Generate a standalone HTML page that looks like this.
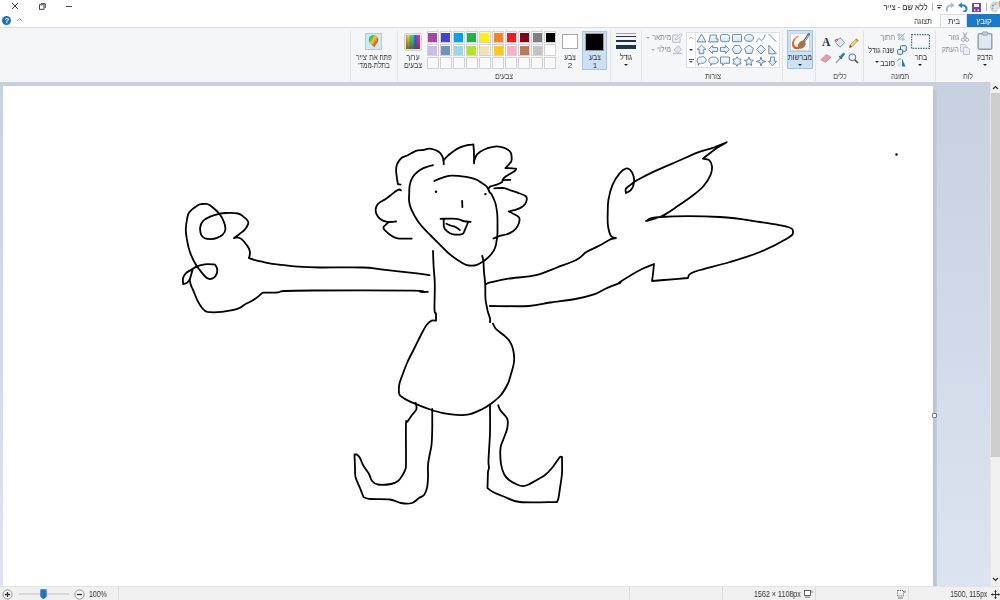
<!DOCTYPE html>
<html><head><meta charset="utf-8">
<style>
*{margin:0;padding:0;box-sizing:border-box}
html,body{width:1000px;height:600px;overflow:hidden;background:#fff;font-family:"Liberation Sans",sans-serif;color:#222}
.a{position:absolute}
#ribbon{left:0;top:27px;width:1000px;height:55px;background:#f5f6f7;border-top:1px solid #dadbdc}
#ws{left:0;top:82px;width:990px;height:504px;background:linear-gradient(#c6d0df,#dce4f1)}
#canvas{left:3px;top:86px;width:930px;height:500px;background:#fff}
#shadow{left:933px;top:90px;width:4px;height:496px;background:linear-gradient(90deg,#b6c1d3,#c3cddd)}
#sb{left:990px;top:82px;width:10px;height:504px;background:#f0f0f0;border-left:1px solid #e6e6e6}
#thumb{left:991px;top:93px;width:9px;height:364px;background:#cdcdcd}
#status{left:0;top:586px;width:1000px;height:14px;background:#f0f0f0;border-top:1px solid #e3e3e3}
.t{position:absolute;white-space:nowrap;font-size:8px;line-height:8px;direction:rtl;color:#333;will-change:transform}
.c{transform:translateX(-50%) scaleX(var(--s,.86));text-align:center}
.r{transform:scaleX(var(--s,.86));transform-origin:right}
.g{color:#8a8a8a}
.sep{position:absolute;top:31px;width:1px;height:50px;background:#e2e3e4}
.arr{position:absolute;width:0;height:0;border-left:2.5px solid transparent;border-right:2.5px solid transparent;border-top:2.5px solid #222}
.cell{position:absolute;width:12px;height:12px;border:1px solid #d2d2d2;background:#fff;padding:0.5px}
.cell i{display:block;width:100%;height:100%}
</style></head><body>

<div class="a" style="left:0;top:0;width:1000px;height:27px;background:#fff"></div>
<!-- title bar -->
<div class="t" style="right:72px;top:3px;font-size:9px;line-height:9px;color:#1a1a1a;transform:scaleX(.84);transform-origin:right">ללא שם - צייר</div>
<div class="a" style="left:931.5px;top:3px;width:1px;height:8px;background:#b5b5b5"></div>
<div class="a" style="left:937px;top:5px;width:5px;height:0.8px;background:#555"></div>
<div class="arr" style="left:937px;top:7px;border-left-width:2.5px;border-right-width:2.5px;border-top-width:2.5px"></div>
<svg class="a" style="left:945px;top:2px" width="10" height="10" viewBox="0 0 10 10"><path d="M2 9.5C1.3 6 2.5 3.3 6 3.2" fill="none" stroke="#a9bcd2" stroke-width="2.1"/><path d="M5.8 0.3L9.8 3.2L5.8 6.2Z" fill="#a9bcd2"/></svg>
<svg class="a" style="left:958px;top:2px" width="10" height="10" viewBox="0 0 10 10"><path d="M3.5 3.2C7 3 8.8 5 8.5 7.2C8.2 9 6.8 9.8 5.2 9.5" fill="none" stroke="#2c80d3" stroke-width="2.1"/><path d="M4 0.3L0.2 3.2L4 6.2Z" fill="#2c80d3"/></svg>
<svg class="a" style="left:972px;top:3px" width="9" height="9" viewBox="0 0 9 9"><rect x="0" y="0" width="9" height="9" fill="#7448a0"/><rect x="2" y="1" width="5" height="3" fill="#f3eef8"/><rect x="2" y="6.5" width="1.5" height="1.5" fill="#e8dff2"/><rect x="5.5" y="6.5" width="1.5" height="1.5" fill="#e8dff2"/></svg>
<div class="a" style="left:986px;top:3px;width:1px;height:8px;background:#b5b5b5"></div>
<svg class="a" style="left:990px;top:1px" width="10" height="12" viewBox="0 0 10 12"><path d="M5 1C8.5 1 10 3 10 5.5C10 7 9 7.5 8 7.3C7 7.2 6.6 8 7 9C7.4 10.3 6.5 11 5 11C2 11 0.5 8.5 0.5 6C0.5 3 2.5 1 5 1Z" fill="#dfe6ec" stroke="#9fb0bf" stroke-width="0.6"/><circle cx="3" cy="4.5" r="1.1" fill="#4aa0e0"/><circle cx="5.5" cy="3.2" r="1" fill="#7bc47a"/><circle cx="2.8" cy="7.5" r="1" fill="#e0a040"/><path d="M8.5 0L10 0V6L8.8 5Z" fill="#f0a040"/></svg>
<!-- window buttons -->
<svg class="a" style="left:11px;top:2px" width="8" height="8" viewBox="0 0 8 8"><path d="M1 1L7 7M7 1L1 7" stroke="#222" stroke-width="0.9"/></svg>
<svg class="a" style="left:39px;top:3px" width="7" height="7" viewBox="0 0 7 7"><rect x="0.5" y="1.8" width="4.5" height="4.5" fill="none" stroke="#333" stroke-width="0.9"/><path d="M1.8 0.6H6.3V5" fill="none" stroke="#333" stroke-width="0.9"/></svg>
<div class="a" style="left:66px;top:6px;width:6px;height:1px;background:#444"></div>
<!-- tabs -->
<div class="a" style="left:967px;top:14px;width:33px;height:13px;background:#1979ca"></div>
<div class="t c" style="left:983.5px;top:18px;color:#fff;font-size:8px;--s:1">קובץ</div>
<div class="a" style="left:940px;top:14px;width:27px;height:14px;background:#f8f9fa;border:1px solid #dadbdc;border-bottom:none"></div>
<div class="t c" style="left:954px;top:18px;font-size:8px;--s:.95">בית</div>
<div class="t c" style="left:923px;top:18px;font-size:8px">תצוגה</div>
<!-- help -->
<div class="a" style="left:2px;top:16px;width:9px;height:9px;border-radius:50%;background:#1a6fc4"></div>
<div class="t c" style="left:6.5px;top:17px;color:#fff;font-size:8px;font-weight:bold;direction:ltr;--s:1">?</div>
<svg class="a" style="left:16px;top:17px" width="7" height="5" viewBox="0 0 7 5"><path d="M1 4L3.5 1.5L6 4" fill="none" stroke="#999" stroke-width="1"/></svg>

<div id="ribbon" class="a"></div>
<div class="sep" style="left:935px"></div>
<div class="sep" style="left:863px"></div>
<div class="sep" style="left:815px"></div>
<div class="sep" style="left:782px"></div>
<div class="sep" style="left:641px"></div>
<div class="sep" style="left:610px"></div>
<div class="sep" style="left:397px"></div>
<div class="sep" style="left:350px"></div>
<!-- group labels -->
<div class="t c" style="left:968px;top:73px;color:#444">לוח</div>
<div class="t c" style="left:899.5px;top:73px;color:#444">תמונה</div>
<div class="t c" style="left:840px;top:73px;color:#444">כלים</div>
<div class="t c" style="left:712.5px;top:73px;color:#444">צורות</div>
<div class="t c" style="left:503.5px;top:73px;color:#444">צבעים</div>

<!-- clipboard -->
<svg class="a" style="left:977px;top:31px" width="16" height="20" viewBox="0 0 16 20"><rect x="1.2" y="2.6" width="13.6" height="15.6" rx="1.2" fill="#dfe8f2" stroke="#8e9db0" stroke-width="1.4"/><rect x="5.2" y="1" width="5.6" height="3" rx="0.8" fill="#c9d3de" stroke="#8e9db0" stroke-width="1"/></svg>
<div class="t c" style="left:985px;top:54px">הדבק</div>
<div class="arr" style="left:982.5px;top:64px"></div>
<svg class="a" style="left:961px;top:32px" width="8" height="10" viewBox="0 0 8 10"><path d="M2 0.5L5.5 6M6 0.5L2.5 6" stroke="#9aaabb" stroke-width="1.1" fill="none"/><circle cx="2" cy="7.8" r="1.6" fill="none" stroke="#9aaabb" stroke-width="1"/><circle cx="6" cy="7.8" r="1.6" fill="none" stroke="#9aaabb" stroke-width="1"/></svg>
<div class="t r g" style="right:41px;top:34px">גזור</div>
<svg class="a" style="left:960px;top:44px" width="10" height="11" viewBox="0 0 10 11"><path d="M0.5 0.5H5L6 1.5V7.5H0.5Z" fill="#e9eef4" stroke="#b5c1cf" stroke-width="0.9"/><path d="M3.5 3.5H8L9.5 5V10.5H3.5Z" fill="#e9eef4" stroke="#b5c1cf" stroke-width="0.9"/></svg>
<div class="t r g" style="right:41px;top:46px">העתק</div>
<!-- image -->
<svg class="a" style="left:911px;top:34px" width="19" height="15" viewBox="0 0 19 15"><rect x="0.6" y="0.6" width="17.8" height="13.8" fill="none" stroke="#4a6d96" stroke-width="1.2" stroke-dasharray="1.6 1"/></svg>
<div class="t c" style="left:920.5px;top:54px">בחר</div>
<div class="arr" style="left:918px;top:64px"></div>
<svg class="a" style="left:897px;top:33px" width="9" height="8" viewBox="0 0 9 8"><path d="M2 0V6H8M0 2H6V8M1 7L8 0" fill="none" stroke="#9fb4c8" stroke-width="1"/></svg>
<div class="t r g" style="right:105px;top:34px">חתוך</div>
<svg class="a" style="left:897px;top:45px" width="10" height="10" viewBox="0 0 10 10"><rect x="3.5" y="0.7" width="5.8" height="5.5" rx="0.8" fill="#eaf2fa" stroke="#2f6fa8" stroke-width="1"/><rect x="0.7" y="4.5" width="4.8" height="4.8" rx="0.8" fill="#eaf2fa" stroke="#2f6fa8" stroke-width="1"/></svg>
<div class="t r" style="right:106px;top:47px">שנה גודל</div>
<svg class="a" style="left:896px;top:58px" width="10" height="9" viewBox="0 0 10 9"><path d="M6 0.5L9.5 8.5H6Z" fill="#2e78b8"/><path d="M4.5 2.5L1 8.5H4.5Z" fill="#d7dde4"/><path d="M1.5 3C2.5 1 4 0.8 5 1" fill="none" stroke="#2e78b8" stroke-width="0.9"/></svg>
<div class="t r" style="right:105px;top:60px">סובב</div>
<div class="arr" style="left:874.5px;top:61px"></div>
<!-- tools -->
<svg class="a" style="left:847.5px;top:37.5px" width="11" height="11" viewBox="0 0 11 11"><path d="M1.5 9.5L2.2 7L8.5 0.8L10.2 2.5L4 8.8Z" fill="#f0d77a" stroke="#b58a3a" stroke-width="0.8"/><path d="M1.5 9.5L2.2 7L4 8.8Z" fill="#6b4a2a"/><path d="M8.5 0.8L10.2 2.5L9.2 3.5L7.5 1.8Z" fill="#e07a5a"/></svg>
<svg class="a" style="left:834px;top:36.5px" width="12" height="11" viewBox="0 0 12 11"><path d="M6 0.8L10.8 5.5L6 10.2L1.5 5.5Z" fill="#dceaf7" stroke="#6b90b5" stroke-width="0.9"/><path d="M1 4.5C1.5 2.5 3 2 4 2.3" fill="none" stroke="#e0603a" stroke-width="1.4"/></svg>
<div class="a" style="left:822px;top:36px;font-family:'Liberation Serif',serif;font-weight:bold;font-size:11.5px;line-height:12px;color:#1d2f4f">A</div>
<svg class="a" style="left:820px;top:53px" width="12" height="10" viewBox="0 0 12 10"><path d="M0.8 7L6.5 1.2L11 4.2L5.5 9.2Z" fill="#f29aa6" stroke="#d77a88" stroke-width="0.7"/></svg>
<svg class="a" style="left:835px;top:52px" width="11" height="12" viewBox="0 0 11 12"><path d="M1 11L6 5" stroke="#8ea3b8" stroke-width="1.3"/><path d="M5 4L8 1C9 0.3 10.5 1.5 9.8 2.6L7 6Z" fill="#2e7ac0"/><path d="M4.3 4.3L6.8 6.8" stroke="#1d5a94" stroke-width="1.4"/></svg>
<svg class="a" style="left:848px;top:53px" width="11" height="11" viewBox="0 0 11 11"><circle cx="4.3" cy="4.3" r="3.3" fill="#eef4fa" stroke="#6c829a" stroke-width="1.1"/><path d="M6.8 6.8L10 10" stroke="#6a5238" stroke-width="1.7"/></svg>
<!-- brushes -->
<div class="a" style="left:787px;top:30px;width:26px;height:38.5px;background:#cde1f5;border:1px solid #9dc3e8"></div>
<div class="a" style="left:788px;top:51px;width:24px;height:1px;background:#a9cbec"></div>
<div class="a" style="left:790px;top:32.5px;width:20px;height:18.5px;background:#fafafa;border:1px solid #c9d6e3"></div>
<svg class="a" style="left:790px;top:32px" width="20" height="19" viewBox="0 0 20 19"><defs><linearGradient id="bo" x1="0" y1="0" x2="0" y2="1"><stop offset="0" stop-color="#f08a4a"/><stop offset="1" stop-color="#d8501c"/></linearGradient></defs><path d="M8.5 3.5C3.5 5.2 0.6 10.5 2.6 14.8C4.5 18.3 9.8 18 12.3 14.6L10.4 13.2C8.5 15.6 5.6 15.6 4.6 13.6C3.2 10.8 5 6.6 8.8 4.6Z" fill="url(#bo)"/><path d="M13.6 10.2L18.8 2.2" stroke="#56667c" stroke-width="2.4" stroke-linecap="round"/><path d="M14.6 9.2L18.6 2.8" stroke="#d8e0ea" stroke-width="0.7"/><ellipse cx="11.8" cy="12.6" rx="3.3" ry="4.3" transform="rotate(42 11.8 12.6)" fill="#a47646"/></svg>
<div class="t c" style="left:800px;top:54px">מברשות</div>
<div class="arr" style="left:797.5px;top:64px"></div>
<!-- shapes gallery -->
<div class="a" style="left:686px;top:32px;width:94px;height:36px;background:#fff;border:1px solid #dcdfe3"></div>
<div class="a" style="left:694.5px;top:33px;width:1px;height:34px;background:#e2e4e7"></div>
<svg class="a" style="left:688px;top:36px" width="6" height="4" viewBox="0 0 6 4"><path d="M1 3L3 1L5 3" fill="none" stroke="#b8b8b8" stroke-width="0.9"/></svg>
<div class="arr" style="left:688.5px;top:49px;border-top-color:#333"></div>
<div class="a" style="left:688.5px;top:59px;width:5px;height:1px;background:#555"></div>
<div class="arr" style="left:688.5px;top:61px;border-top-color:#555"></div>
<svg class="a" style="left:695px;top:32px" width="85" height="36" viewBox="0 0 85 36"><defs><linearGradient id="sg" x1="0" y1="0" x2="0" y2="1"><stop offset="0" stop-color="#fbfdff"/><stop offset="1" stop-color="#cfe4f5"/></linearGradient></defs><g fill="url(#sg)" stroke="#52789b" stroke-width="0.85" stroke-linejoin="round"><path d="M6.5 2L11 10H2Z"/><path d="M13.8 10L15.3 3H21.5L21 6.8H23V10Z"/><rect x="25.5" y="2.5" width="9" height="7.2" rx="2"/><rect x="37.5" y="2.5" width="9" height="7.2" rx="0.6"/><ellipse cx="54" cy="6" rx="4.4" ry="3.4"/><path d="M61.5 10C63 6.5 64.3 5.8 65.3 7.6C66.3 9.4 68 8.5 70.3 2.5" fill="none"/><path d="M73.5 2L81.5 10" fill="none"/><path d="M6.5 13.2L10.8 17.3H8.8V21.8H4.2V17.3H2.2Z"/><path d="M13.5 17.5L17.6 13.4V15.6H22.6V19.4H17.6V21.6Z"/><path d="M34.5 17.5L30.4 13.4V15.6H25.4V19.4H30.4V21.6Z"/><path d="M39.6 13.5H44.4L46.8 17.5L44.4 21.5H39.6L37.2 17.5Z"/><path d="M54 13.2L58.4 16.3L56.7 21.5H51.3L49.6 16.3Z"/><path d="M66 13L70.5 17.5L66 22L61.5 17.5Z"/><path d="M73.8 13.2L81.5 21.8H73.8Z"/><path d="M3.5 31.2C1.8 30.5 1.5 28 2.6 27C2.5 25.2 4.5 24.5 5.8 25.2C7 24.3 9 24.5 9.8 25.8C11.4 26.2 11.6 28.8 10.4 29.6C10 31.2 7.8 31.8 6.5 31.2C5.8 31.8 4.8 32 4.2 31.6L3.2 33.5Z"/><path d="M16.2 31.7C14.5 31.2 13.7 30 13.7 28.5C13.7 26.4 15.8 25 18.5 25C21.2 25 23.3 26.4 23.3 28.5C23.3 30.6 21.2 32 18.5 32C17.9 32 17.4 31.9 16.9 31.8L15.5 33.8Z"/><path d="M25.5 25H34.5V31.3H29.3L27.6 33.6V31.3H25.5Z"/><path d="M42.00 24.70L43.45 26.99L46.16 27.10L44.90 29.50L46.16 31.90L43.45 32.01L42.00 34.30L40.55 32.01L37.84 31.90L39.10 29.50L37.84 27.10L40.55 26.99Z"/><path d="M54.00 24.90L55.23 28.00L58.57 28.22L56.00 30.35L56.82 33.58L54.00 31.80L51.18 33.58L52.00 30.35L49.43 28.22L52.77 28.00Z"/><path d="M66.00 24.90L67.06 28.44L70.60 29.50L67.06 30.56L66.00 34.10L64.94 30.56L61.40 29.50L64.94 28.44Z"/><path d="M75.6 25H79.4V29.3H81.6L77.5 33.8L73.4 29.3H75.6Z"/></g></svg>
<!-- outline/fill -->
<svg class="a" style="left:672px;top:33px" width="11" height="10" viewBox="0 0 11 10"><path d="M0.7 9.3V2H6M0.7 9.3H8V5" fill="none" stroke="#a9b6c4" stroke-width="0.9"/><path d="M3 7L3.5 5L8.8 0.7L10.3 2.2L5 6.5Z" fill="#eef2f6" stroke="#a9b6c4" stroke-width="0.8"/></svg>
<div class="t r g" style="right:329px;top:34px">מיתאר</div>
<div class="arr" style="left:646px;top:36.5px;border-top-color:#aaa"></div>
<svg class="a" style="left:672px;top:44px" width="11" height="11" viewBox="0 0 11 11"><path d="M1 9.5H10" stroke="#b6c2cf" stroke-width="1.4"/><path d="M2 6L6 1.5L9.5 5.5L5.5 9Z" fill="#dde6ef" stroke="#a9b6c4" stroke-width="0.8"/></svg>
<div class="t r g" style="right:329px;top:46px">מילוי</div>
<div class="arr" style="left:651px;top:48.5px;border-top-color:#aaa"></div>
<!-- size -->
<div class="a" style="left:616px;top:32.5px;width:20px;height:1.5px;background:#9aa3ad"></div>
<div class="a" style="left:616px;top:35.5px;width:20px;height:1.6px;background:#1d3353"></div>
<div class="a" style="left:616px;top:39.5px;width:20px;height:2.4px;background:#1d3353"></div>
<div class="a" style="left:616px;top:44.5px;width:20px;height:4px;background:#1d3353"></div>
<div class="t c" style="left:626px;top:54px">גודל</div>
<div class="arr" style="left:623.5px;top:64px"></div>
<!-- color1/2 -->
<div class="a" style="left:582px;top:30.5px;width:25px;height:39px;background:#cce0f5;border:1px solid #a3c7ea"></div>
<div class="a" style="left:585px;top:32.5px;width:19px;height:18px;background:#000;border:1px solid #9a9a9a;box-shadow:inset 0 0 0 1px #fff"></div>
<div class="a" style="left:586px;top:33.5px;width:17px;height:16px;background:#000"></div>
<div class="t c" style="left:594.5px;top:54px">צבע</div>
<div class="t c" style="left:594.5px;top:62px;direction:ltr;--s:1">1</div>
<div class="a" style="left:562px;top:34px;width:15.5px;height:15px;background:#fff;border:1px solid #a9a9a9"></div>
<div class="t c" style="left:569.5px;top:54px">צבע</div>
<div class="t c" style="left:569.5px;top:62px;direction:ltr;--s:1">2</div>
<div class="cell" style="left:426.5px;top:31.2px"><i style="background:#a349a4"></i></div>
<div class="cell" style="left:439.6px;top:31.2px"><i style="background:#3f48cc"></i></div>
<div class="cell" style="left:452.7px;top:31.2px"><i style="background:#00a2e8"></i></div>
<div class="cell" style="left:465.8px;top:31.2px"><i style="background:#22b14c"></i></div>
<div class="cell" style="left:478.9px;top:31.2px"><i style="background:#fff200"></i></div>
<div class="cell" style="left:492.0px;top:31.2px"><i style="background:#ff7f27"></i></div>
<div class="cell" style="left:505.1px;top:31.2px"><i style="background:#ed1c24"></i></div>
<div class="cell" style="left:518.2px;top:31.2px"><i style="background:#880015"></i></div>
<div class="cell" style="left:531.3px;top:31.2px"><i style="background:#7f7f7f"></i></div>
<div class="cell" style="left:544.4px;top:31.2px"><i style="background:#000000"></i></div>
<div class="cell" style="left:426.5px;top:44.2px"><i style="background:#c8bfe7"></i></div>
<div class="cell" style="left:439.6px;top:44.2px"><i style="background:#7092be"></i></div>
<div class="cell" style="left:452.7px;top:44.2px"><i style="background:#99d9ea"></i></div>
<div class="cell" style="left:465.8px;top:44.2px"><i style="background:#b5e61d"></i></div>
<div class="cell" style="left:478.9px;top:44.2px"><i style="background:#efe4b0"></i></div>
<div class="cell" style="left:492.0px;top:44.2px"><i style="background:#ffc90e"></i></div>
<div class="cell" style="left:505.1px;top:44.2px"><i style="background:#ffaec9"></i></div>
<div class="cell" style="left:518.2px;top:44.2px"><i style="background:#b97a57"></i></div>
<div class="cell" style="left:531.3px;top:44.2px"><i style="background:#c3c3c3"></i></div>
<div class="cell" style="left:544.4px;top:44.2px"><i style="background:#ffffff"></i></div>
<div class="cell" style="left:426.5px;top:57.2px;background:#f9f9f9"></div>
<div class="cell" style="left:439.6px;top:57.2px;background:#f9f9f9"></div>
<div class="cell" style="left:452.7px;top:57.2px;background:#f9f9f9"></div>
<div class="cell" style="left:465.8px;top:57.2px;background:#f9f9f9"></div>
<div class="cell" style="left:478.9px;top:57.2px;background:#f9f9f9"></div>
<div class="cell" style="left:492.0px;top:57.2px;background:#f9f9f9"></div>
<div class="cell" style="left:505.1px;top:57.2px;background:#f9f9f9"></div>
<div class="cell" style="left:518.2px;top:57.2px;background:#f9f9f9"></div>
<div class="cell" style="left:531.3px;top:57.2px;background:#f9f9f9"></div>
<div class="cell" style="left:544.4px;top:57.2px;background:#f9f9f9"></div>

<!-- edit colors -->
<div class="a" style="left:404px;top:32.5px;width:18px;height:18px;border:1px solid #d6d0ca;border-radius:2px;background:#ebe7e3;padding:1px"><div style="width:100%;height:100%;background:linear-gradient(rgba(255,255,255,.1),rgba(90,70,50,.75)),linear-gradient(90deg,#e8901a,#e8e020,#30d030,#20c8e0,#2040e0,#c020d0,#e02090)"></div></div>
<div class="t c" style="left:413px;top:54px">ערוך</div>
<div class="t c" style="left:413px;top:62px">צבעים</div>
<!-- paint3d -->
<div class="a" style="left:364.5px;top:32.5px;width:17px;height:17px;background:#c6eef8;border:1px solid #c0c6cc"></div>
<svg class="a" style="left:367px;top:34px" width="13" height="15" viewBox="0 0 13 15"><defs><linearGradient id="bl" x1="0.1" y1="0.1" x2="0.9" y2="0.8"><stop offset="0" stop-color="#1aa3d9"/><stop offset="0.25" stop-color="#5cc24a"/><stop offset="0.45" stop-color="#f7d117"/><stop offset="0.7" stop-color="#f2711c"/><stop offset="1" stop-color="#d8262f"/></linearGradient></defs><path d="M6.5 1C9.6 1 11.6 3.2 11.3 6C11 8.8 8.6 10.2 7.3 13.6L6.2 11.8C3.5 10 1.6 8.2 1.8 5.4C2 2.8 4 1 6.5 1Z" fill="url(#bl)"/><path d="M4.5 9.5C5.5 10.8 6.5 11.2 7.3 13.6L6.2 11.8C5.2 11 4.8 10.5 4.5 9.5Z" fill="#6b3fa0"/></svg>
<div class="t c" style="left:374px;top:54px;--s:.8">פתח את 'צייר</div>
<div class="t c" style="left:374px;top:62px;--s:.8">בתלת-ממד'</div>

<div id="ws" class="a"></div>
<div id="shadow" class="a"></div>
<div id="canvas" class="a"></div>
<!--DRAW--><svg class="a" style="left:0;top:0" width="1000" height="600" viewBox="0 0 1000 600"><g fill="none" stroke="#000" stroke-width="1.8" stroke-linecap="round" stroke-linejoin="round"><path d="M400.6 184.6L397.9 184.1C397.8 183.2 397.3 181.0 397.0 178.7C396.7 176.5 396.1 173.0 396.1 170.6C396.1 168.2 396.1 166.4 397.0 164.3C397.9 162.2 399.7 159.5 401.5 158.0C403.3 156.5 405.4 156.5 407.8 155.3C410.2 154.1 413.2 151.7 415.9 150.8C418.6 149.9 421.9 150.3 424.0 149.9C426.1 149.5 426.9 148.6 428.5 148.6C430.2 148.5 432.1 148.9 433.9 149.5C435.7 150.1 438.0 151.1 439.3 152.2C440.7 153.2 441.3 154.6 442.0 155.8C442.7 157.0 443.1 157.9 443.4 159.4C443.7 160.8 443.7 163.5 443.8 164.3"/><path d="M443.4 160.3C444.2 159.4 446.4 157.0 448.3 155.3C450.2 153.7 452.5 151.7 454.6 150.4C456.7 149.0 458.6 148.1 460.8 147.2C463.0 146.3 465.9 145.4 468.0 145.0C470.1 144.5 472.5 144.6 473.4 144.5C473.5 145.6 473.7 147.7 473.9 150.8C474.0 154.0 474.1 161.3 474.1 163.4"/><path d="M474.1 161.2C474.6 160.0 475.3 156.4 477.0 154.4C478.7 152.5 481.5 150.7 484.2 149.5C486.9 148.2 490.5 147.2 493.2 146.8C495.9 146.3 498.2 146.4 500.4 146.8C502.7 147.1 505.0 148.0 506.7 149.0C508.4 150.0 509.9 151.1 510.8 152.6C511.6 154.1 511.6 156.5 511.7 158.0C511.7 159.5 511.7 160.5 511.2 161.6C510.7 162.7 509.5 163.7 508.5 164.8C507.5 165.8 505.9 167.5 505.4 168.1C506.6 168.1 511.2 168.2 513.0 168.4C514.8 168.5 515.6 168.7 516.2 168.8C515.9 169.2 516.1 170.1 514.8 171.1C513.5 172.0 510.3 173.5 508.5 174.7C506.7 175.8 505.0 176.9 504.0 177.8C503.0 178.7 503.0 179.3 502.7 180.1C502.3 180.8 502.7 181.6 501.8 182.3C500.8 183.1 498.7 183.9 496.8 184.6C494.9 185.2 491.9 185.7 490.5 186.4C489.2 187.0 489.0 188.2 488.7 188.6"/><path d="M502.7 180.1L510.3 179.9"/><path d="M494.3 188.3C496.0 188.3 501.5 187.8 504.2 188.1C506.9 188.4 508.1 189.5 510.5 190.4C512.9 191.2 516.1 192.1 518.6 193.1C521.2 194.0 524.5 195.1 525.8 196.2C527.2 197.3 526.9 198.5 526.7 199.8C526.6 201.2 526.0 203.0 524.9 204.3C523.9 205.7 522.2 206.9 520.4 207.9C518.6 208.9 516.1 209.6 514.1 210.2C512.2 210.8 509.6 211.3 508.7 211.5C509.5 211.9 511.6 212.9 513.2 213.8C514.9 214.7 517.6 215.8 518.6 216.9C519.7 218.0 519.7 219.0 519.5 220.5C519.4 222.0 518.6 224.3 517.7 225.9C516.8 227.6 515.5 229.2 514.1 230.4C512.8 231.6 511.0 232.4 509.6 233.1C508.3 233.8 507.7 234.0 506.0 234.5C504.4 234.9 501.2 235.4 499.7 235.8C498.2 236.3 498.1 236.7 497.0 237.2C496.0 237.6 494.0 238.3 493.4 238.5"/><path d="M401.0 190.4C400.7 190.3 400.1 189.4 399.2 189.5C398.3 189.7 397.0 190.4 395.6 191.3C394.3 192.2 392.8 193.6 391.1 194.9C389.5 196.2 387.7 197.7 385.7 199.0C383.8 200.2 381.0 201.3 379.4 202.6C377.8 203.8 376.9 205.0 376.3 206.6C375.7 208.2 375.4 210.2 375.8 212.0C376.2 213.8 377.3 216.0 378.5 217.4C379.7 218.8 381.5 219.8 383.0 220.6C384.5 221.3 386.0 221.7 387.5 221.9C389.0 222.1 390.6 222.0 392.0 221.9C393.4 221.8 395.4 221.5 396.1 221.5"/><path d="M388.4 222.4C387.7 223.0 385.2 225.0 384.4 226.0C383.5 226.9 383.1 227.2 383.5 228.2C383.8 229.2 385.3 230.6 386.6 231.8C387.9 233.0 389.5 234.4 391.1 235.4C392.8 236.5 395.0 237.6 396.5 238.1C398.0 238.6 397.5 238.5 400.0 238.6C402.5 238.6 409.8 238.6 411.7 238.6"/><path d="M434.4 181.0C435.6 180.4 439.2 178.7 442.0 177.8C444.8 176.9 447.0 175.7 451.0 175.6C455.0 175.4 462.2 176.3 466.2 176.9C470.2 177.5 472.7 178.2 475.2 179.2C477.8 180.1 479.6 181.5 481.5 182.8C483.5 184.0 485.6 185.2 486.9 186.8C488.3 188.4 488.8 190.9 489.6 192.2C490.4 193.5 490.7 192.7 491.6 194.4C492.5 196.1 494.3 199.7 495.2 202.5C496.1 205.4 496.6 208.5 497.0 211.5C497.4 214.5 497.4 217.1 497.5 220.5C497.5 224.0 497.5 229.2 497.5 232.2C497.4 235.2 497.4 236.0 497.0 238.5C496.6 241.1 496.1 245.0 495.2 247.5C494.3 250.1 493.1 251.9 491.6 253.8C490.1 255.8 488.0 257.7 486.2 259.2C484.4 260.7 482.8 261.8 480.8 262.8C478.9 263.9 477.0 265.2 474.5 265.5C472.0 265.8 468.8 265.7 466.0 264.8C463.2 263.9 460.6 262.0 457.6 260.0C454.6 258.0 451.0 255.4 448.0 252.8C445.0 250.2 442.4 247.2 439.6 244.4C436.8 241.6 432.8 237.6 431.2 236.0C429.6 234.4 430.9 235.7 429.8 234.5C428.7 233.4 426.2 231.1 424.4 229.1C422.6 227.2 420.7 225.1 419.0 222.8C417.4 220.6 415.9 218.0 414.5 215.6C413.2 213.2 411.8 210.8 410.9 208.4C410.0 206.0 409.4 203.6 409.1 201.2C408.8 198.8 409.1 196.6 409.2 194.0C409.2 191.5 409.2 188.3 409.6 185.9C410.0 183.5 410.5 181.6 411.4 179.6C412.3 177.7 413.5 175.9 415.0 174.2C416.5 172.6 418.3 171.0 420.4 169.7C422.5 168.4 425.5 167.3 427.6 166.6C429.7 165.8 432.1 165.4 433.0 165.2"/><path d="M462.1 200.8L462.4 207.1"/><path d="M440.5 218.8C443.2 218.8 453.0 218.4 456.7 218.8C460.5 219.1 460.7 220.5 463.0 221.0C465.3 221.5 469.4 221.8 470.7 221.9"/><path d="M443.7 219.2C443.7 220.6 443.6 225.4 444.1 227.3C444.6 229.3 445.5 229.8 446.8 230.9C448.2 232.0 449.7 233.5 452.2 234.1C454.8 234.6 460.0 234.7 462.1 234.1C464.2 233.4 464.0 231.6 464.8 230.0C465.6 228.4 466.5 226.0 467.1 224.6C467.6 223.3 467.8 222.4 468.0 221.9"/><path d="M446.4 223.7C447.0 224.0 448.8 224.9 450.4 225.5C452.0 226.1 454.2 226.6 455.8 227.3C457.4 228.1 459.2 229.6 459.9 230.0"/><path d="M482.2 255.8C482.4 256.7 483.1 258.5 483.4 261.2C483.7 263.9 483.7 268.2 484.0 272.0C484.3 275.8 485.0 279.5 485.2 284.0C485.5 288.5 485.1 294.5 485.5 299.0C485.9 303.5 487.0 307.7 487.7 311.0C488.5 314.2 489.6 316.6 490.0 318.5C490.4 320.4 490.0 321.6 490.0 322.2"/><path d="M433.0 251.0C433.1 253.5 433.3 260.5 433.6 266.0C433.9 271.5 434.7 276.8 434.8 284.0C435.0 291.3 434.3 304.6 434.5 309.5C434.7 314.4 435.7 312.6 436.0 313.2L436.0 320.7C435.2 320.7 433.0 320.1 431.5 320.7C430.0 321.4 428.5 322.6 427.0 324.5C425.5 326.4 424.5 328.2 422.5 332.0C420.5 335.7 417.5 342.0 415.0 347.0C412.5 352.0 409.7 356.9 407.5 362.0C405.2 367.1 402.9 373.7 401.5 377.5C400.1 381.3 399.6 382.2 399.2 385.0C398.9 387.7 398.6 391.9 399.2 394.0C399.9 396.1 400.4 396.1 403.0 397.7C405.6 399.4 410.0 401.6 415.0 403.7C420.0 405.9 427.2 408.7 433.0 410.5C438.7 412.2 443.7 413.5 449.5 414.2C455.2 414.9 462.0 415.6 467.5 414.7C473.0 413.8 478.7 410.7 482.5 409.0C486.2 407.3 487.0 406.7 490.0 404.5C493.0 402.2 497.5 399.0 500.5 395.5C503.5 392.0 506.2 387.1 508.0 383.5C509.7 379.9 510.0 377.6 511.0 374.0C512.0 370.4 513.6 366.0 514.0 362.0C514.4 358.0 514.0 353.5 513.2 350.0C512.5 346.5 511.1 343.5 509.5 341.0C507.9 338.5 505.7 337.0 503.5 335.0C501.2 333.0 497.7 330.9 496.0 329.0C494.2 327.1 493.5 324.6 493.0 323.7"/><path d="M429.6 275.2C427.5 274.9 425.1 274.4 417.0 273.4C408.9 272.4 390.0 270.4 381.0 269.4C372.0 268.4 373.2 267.8 363.0 267.5C352.8 267.1 330.6 267.6 319.8 267.5C309.0 267.3 305.4 267.1 298.2 266.6C291.0 266.0 282.6 265.2 276.6 264.4C270.6 263.6 265.9 262.5 262.2 261.7C258.5 260.9 256.4 260.4 254.2 259.8C252.0 259.2 249.7 258.3 248.8 258.0C249.0 257.6 249.6 256.5 249.7 255.3C249.9 254.1 250.2 252.5 249.7 250.8C249.3 249.2 248.4 247.3 247.0 245.4C245.7 243.5 243.3 240.5 241.6 239.1C240.0 237.8 238.4 237.5 237.1 237.3C235.8 237.2 234.5 238.1 234.0 238.2C234.9 237.5 238.1 235.1 239.8 233.7C241.5 232.4 243.0 231.6 244.3 230.1C245.7 228.6 247.3 226.2 247.9 224.7C248.5 223.2 248.7 222.5 247.9 221.1C247.2 219.8 245.1 217.9 243.4 216.6C241.8 215.3 241.0 214.1 238.0 213.5C235.0 212.9 228.6 212.9 225.4 213.0C222.3 213.1 221.7 213.3 219.1 213.9C216.6 214.5 212.8 215.4 210.1 216.6C207.4 217.8 204.6 219.3 202.9 221.1C201.3 222.9 200.5 225.2 200.2 227.4C199.9 229.7 200.4 232.8 201.1 234.6C201.9 236.4 203.1 237.5 204.7 238.2C206.4 239.0 209.1 239.1 211.0 239.1C213.0 239.1 214.5 239.0 216.4 238.2C218.4 237.5 221.2 236.1 222.7 234.6C224.2 233.1 225.3 231.5 225.4 229.2C225.6 227.0 224.7 223.7 223.6 221.1C222.6 218.5 221.1 215.9 219.1 213.5C217.2 211.1 213.9 208.3 211.9 206.7C210.0 205.1 209.1 204.5 207.4 204.0C205.8 203.6 203.7 203.8 202.0 204.0C200.4 204.2 199.6 204.0 197.5 205.4C195.4 206.7 191.1 209.9 189.4 212.1C187.7 214.3 187.8 215.6 187.2 218.4C186.6 221.3 185.9 225.9 185.8 229.2C185.7 232.5 186.3 235.2 186.7 238.2C187.2 241.2 187.8 244.4 188.5 247.2C189.3 250.1 190.0 252.5 191.2 255.3C192.4 258.2 194.2 261.8 195.7 264.3C197.2 266.9 198.7 268.7 200.2 270.6C201.7 272.6 203.4 274.7 204.7 276.0C206.1 277.4 207.1 278.3 208.3 278.7C209.5 279.2 210.7 279.2 211.9 278.7C213.1 278.3 214.6 277.4 215.5 276.0C216.4 274.7 217.3 272.4 217.3 270.6C217.3 268.8 216.3 266.3 215.5 265.2C214.8 264.2 214.6 264.5 212.8 264.3C211.0 264.2 207.3 264.0 204.7 264.3C202.2 264.6 199.8 265.2 197.5 266.1C195.3 267.0 193.2 268.5 191.2 269.7C189.3 270.9 187.2 272.0 185.8 273.3C184.5 274.7 183.6 276.0 183.1 277.8C182.7 279.6 183.1 283.1 183.1 284.1C183.9 283.8 186.4 283.4 187.6 282.3C188.8 281.3 189.6 279.7 190.3 277.8C191.1 275.9 191.7 272.4 192.1 271.1C192.5 269.7 192.5 270.2 192.6 270.0C192.3 271.0 191.2 274.2 190.8 276.0C190.3 277.8 189.8 278.9 189.9 280.5C189.9 282.2 190.7 284.4 191.2 285.9C191.7 287.5 192.0 287.4 193.0 289.8C194.1 292.3 196.0 297.6 197.5 300.6C199.0 303.6 200.4 305.9 202.0 307.8C203.7 309.7 204.1 311.2 207.4 311.9C210.7 312.5 216.7 312.4 221.8 311.9C226.9 311.3 234.1 310.0 238.0 308.7C241.9 307.4 242.8 305.6 245.2 304.2C247.6 302.9 250.2 302.0 252.4 300.6C254.7 299.3 257.1 297.4 258.7 296.1C260.4 294.8 261.3 293.5 262.3 293.0C263.3 292.4 262.2 292.8 264.9 292.7C267.6 292.6 275.2 292.6 278.4 292.3C281.5 292.0 278.1 291.3 283.8 291.0C289.5 290.7 291.0 290.6 312.6 290.5C334.2 290.4 395.4 290.4 413.4 290.7C431.4 290.9 418.2 291.7 420.6 291.9C423.0 292.1 426.6 291.9 427.8 291.9"/><path d="M415.7 403.0C415.9 404.0 417.1 407.0 416.5 409.0C415.9 411.0 413.5 412.9 412.0 415.0C410.5 417.1 408.5 420.2 407.5 421.7C406.5 423.2 406.2 417.6 406.0 424.0C405.7 430.4 406.1 452.5 406.0 460.0C405.9 467.5 406.2 466.3 405.5 469.0C404.8 471.7 403.2 474.0 402.0 476.0C400.8 478.0 399.8 479.7 398.0 481.0C396.2 482.3 394.3 483.4 391.0 484.0C387.7 484.6 381.2 485.0 378.0 484.5C374.8 484.0 373.5 482.8 372.0 481.0C370.5 479.2 370.5 476.7 369.0 474.0C367.5 471.3 364.5 467.7 363.0 465.0C361.5 462.3 361.0 459.8 360.0 458.0C359.0 456.2 357.5 455.1 357.0 454.5L354.5 454.5C354.6 456.6 354.8 463.2 355.0 467.0C355.2 470.8 354.7 473.5 355.5 477.0C356.3 480.5 358.7 484.7 360.0 488.0C361.3 491.3 362.9 495.5 363.5 497.0C364.6 497.3 365.6 498.6 370.0 499.0C374.4 499.4 384.8 498.8 390.0 499.5C395.2 500.2 397.3 502.4 401.0 503.0C404.7 503.6 409.0 503.8 412.0 503.0C415.0 502.2 417.0 499.3 419.0 498.0C421.0 496.7 422.7 496.7 424.0 495.0C425.3 493.3 426.3 490.8 427.0 488.0C427.7 485.2 427.8 481.8 428.0 478.0C428.2 474.2 427.7 469.2 428.0 465.0C428.3 460.8 429.4 456.3 430.0 453.0C430.6 449.7 431.1 448.8 431.5 445.0C431.9 441.2 432.1 436.0 432.2 430.0C432.4 424.0 432.2 412.5 432.2 409.0"/><path d="M490.0 404.5C490.0 409.2 490.2 423.7 490.0 433.0C489.7 442.2 488.7 454.2 488.5 460.0C488.3 465.8 489.1 466.0 489.0 468.0C488.9 470.0 488.2 468.7 488.0 472.0C487.8 475.3 487.6 485.3 487.5 488.0C488.4 488.7 490.1 490.5 493.0 492.0C495.9 493.5 500.5 495.3 505.0 497.0C509.5 498.7 511.3 501.2 520.0 502.0C528.7 502.8 550.8 502.0 557.0 502.0C557.2 501.3 558.0 500.3 558.5 498.0C559.0 495.7 559.4 492.2 560.0 488.0C560.6 483.8 561.7 478.2 562.0 473.0C562.3 467.8 562.0 459.7 562.0 457.0C561.7 457.0 560.8 456.3 560.0 457.0C559.2 457.7 558.3 459.2 557.0 461.0C555.7 462.8 554.0 465.7 552.0 468.0C550.0 470.3 547.8 472.8 545.0 475.0C542.2 477.2 537.8 479.4 535.0 481.0C532.2 482.6 530.0 483.9 528.0 484.8C526.0 485.7 524.8 486.2 523.0 486.2C521.2 486.1 519.3 485.5 517.0 484.5C514.7 483.5 511.2 481.8 509.0 480.0C506.8 478.2 505.3 476.7 504.0 474.0C502.7 471.3 501.6 468.3 501.0 464.0C500.4 459.7 500.1 452.2 500.5 448.0C500.9 443.8 502.4 442.2 503.5 439.0C504.6 435.7 506.6 431.9 507.2 428.5C507.9 425.1 508.4 421.7 507.2 418.7C506.1 415.7 502.0 412.7 500.5 410.5C499.0 408.2 498.6 406.1 498.2 405.2"/><path d="M485.6 284.3C486.5 283.9 487.5 283.1 491.2 282.2C494.9 281.3 500.5 279.9 508.0 278.7C515.5 277.5 527.8 277.1 536.0 275.2C544.2 273.3 550.2 270.1 557.0 267.5C563.8 264.9 571.7 262.4 576.6 259.8C581.5 257.2 582.7 254.4 586.4 252.1C590.1 249.8 594.9 248.0 599.0 245.8C603.1 243.6 609.0 240.1 611.0 239.0L616.0 238.0C615.2 237.7 612.3 238.0 611.0 236.0C609.7 234.0 608.6 229.7 608.0 226.0C607.4 222.3 607.6 218.3 607.7 214.0C607.8 209.7 607.6 204.9 608.4 200.0C609.2 195.1 610.7 189.0 612.6 184.6C614.5 180.2 617.4 176.1 619.6 173.4C621.8 170.7 624.1 169.1 625.9 168.5C627.6 167.9 628.8 168.6 630.1 169.9C631.4 171.2 633.0 173.7 633.6 176.2C634.2 178.6 634.1 182.3 633.6 184.6C633.1 186.9 632.1 188.8 630.8 190.2C629.5 191.6 626.7 192.5 625.9 193.0C625.9 192.3 625.1 190.2 625.9 188.8C626.7 187.4 628.8 186.1 630.8 184.6C632.8 183.1 633.6 182.0 637.8 179.7C642.0 177.4 649.5 173.6 656.0 170.6C662.5 167.6 670.0 164.5 677.0 161.5C684.0 158.5 692.2 154.6 698.0 152.4C703.8 150.2 707.2 149.9 712.0 148.2C716.8 146.5 724.2 143.3 726.7 142.3C725.2 143.2 720.5 145.6 717.6 147.5C714.7 149.4 711.6 151.9 709.2 153.8C706.7 155.7 703.9 157.9 702.9 158.7C703.9 158.9 707.7 158.8 709.2 160.1C710.7 161.4 711.8 163.9 712.0 166.4C712.2 168.8 712.0 171.5 710.6 174.8C709.2 178.1 706.6 182.5 703.6 186.0C700.6 189.5 696.6 192.5 692.4 195.8C688.2 199.1 683.5 202.2 678.4 205.6C673.3 209.0 667.4 213.4 662.0 216.0C656.6 218.6 648.7 220.2 646.0 221.0C648.3 220.3 647.7 217.7 660.0 217.0C672.3 216.3 703.3 216.2 720.0 217.0C736.7 217.8 748.7 220.3 760.0 222.0C771.3 223.7 782.5 225.3 788.0 227.0C793.5 228.7 793.0 230.2 793.0 232.0C793.0 233.8 793.5 234.7 788.0 238.0C782.5 241.3 769.7 248.0 760.0 252.0C750.3 256.0 740.0 259.0 730.0 262.0C720.0 265.0 706.7 268.0 700.0 270.0C693.3 272.0 692.0 272.7 690.0 274.0C688.0 275.3 688.3 277.3 688.0 278.0C684.0 278.3 670.0 279.5 664.0 280.0C658.0 280.5 654.0 280.8 652.0 281.0C652.2 279.8 652.7 276.8 653.0 274.0C653.3 271.2 653.8 265.7 654.0 264.0C651.7 265.0 645.7 267.0 640.0 270.0C634.3 273.0 623.3 279.9 620.0 282.0C616.7 284.1 622.3 281.8 620.0 282.9C617.7 284.0 610.2 286.6 606.0 288.5C601.8 290.4 599.9 292.3 594.8 294.1C589.7 295.8 582.7 297.6 575.2 299.0C567.7 300.4 557.7 301.3 550.0 302.5C542.3 303.7 539.0 305.4 529.0 306.0C519.0 306.6 496.3 306.0 489.8 306.0"/></g><g fill="#000"><circle cx="436" cy="191.8" r="1.2"/><circle cx="485.4" cy="194.1" r="1.2"/><circle cx="896.5" cy="154.5" r="1.2"/></g></svg><!--/DRAW-->
<div class="a" style="left:932px;top:413px;width:5px;height:5px;border:1px solid #777;background:#fff;border-radius:1px"></div>
<div id="sb" class="a"></div>
<div id="thumb" class="a"></div>
<svg class="a" style="left:992px;top:85px" width="7" height="5" viewBox="0 0 7 5"><path d="M1 4L3.5 1.5L6 4" fill="none" stroke="#333" stroke-width="1.2"/></svg>
<svg class="a" style="left:992px;top:577px" width="7" height="5" viewBox="0 0 7 5"><path d="M1 1L3.5 3.5L6 1" fill="none" stroke="#333" stroke-width="1.2"/></svg>
<div id="status" class="a"></div>
<!--STATUS-->
<svg class="a" style="left:2px;top:588.5px" width="11" height="11" viewBox="0 0 11 11"><circle cx="5.5" cy="5.5" r="4.6" fill="#f7f7f7" stroke="#8a8a8a" stroke-width="0.9"/><path d="M5.5 3V8M3 5.5H8" stroke="#333" stroke-width="1.3"/></svg>
<div class="a" style="left:18.5px;top:592.5px;width:50px;height:2px;background:#d9d9d9"></div>
<svg class="a" style="left:40px;top:588.5px" width="7" height="10.5" viewBox="0 0 7 10.5"><path d="M0.3 0.3H6.7V7.5L3.5 10.3L0.3 7.5Z" fill="#1a73d1"/></svg>
<svg class="a" style="left:74px;top:588.5px" width="11" height="11" viewBox="0 0 11 11"><circle cx="5.5" cy="5.5" r="4.6" fill="#f7f7f7" stroke="#8a8a8a" stroke-width="0.9"/><path d="M3 5.5H8" stroke="#333" stroke-width="1.3"/></svg>
<div class="t" style="left:89px;top:589.5px;direction:ltr;font-size:8.5px;color:#333;transform:scaleX(.82);transform-origin:left">100%</div>
<div class="a" style="left:118px;top:587px;width:1px;height:13px;background:#dcdcdc"></div><div class="a" style="left:629px;top:587px;width:1px;height:13px;background:#dcdcdc"></div><div class="a" style="left:722px;top:587px;width:1px;height:13px;background:#dcdcdc"></div>
<div class="t" style="right:199.5px;top:589.5px;direction:ltr;font-size:8.5px;color:#333;transform:scaleX(.84);transform-origin:right">1562 × 1108px</div>
<svg class="a" style="left:803.5px;top:589.5px" width="9" height="8" viewBox="0 0 9 8"><rect x="0.5" y="0.5" width="6" height="5" fill="#fff" stroke="#555" stroke-width="0.9"/><path d="M8 0.5V3M1 7.2H6" stroke="#666" stroke-width="0.9"/></svg>
<div class="a" style="left:815px;top:587px;width:1px;height:13px;background:#dcdcdc"></div>
<svg class="a" style="left:896.5px;top:589.5px" width="9" height="9" viewBox="0 0 9 9"><rect x="0.5" y="0.5" width="6" height="5.5" fill="none" stroke="#555" stroke-width="0.9" stroke-dasharray="1.2 1"/><path d="M8 0.5V3M1 8H6" stroke="#666" stroke-width="0.9"/></svg>
<div class="a" style="left:908px;top:587px;width:1px;height:13px;background:#dcdcdc"></div>
<div class="t" style="right:12.5px;top:589.5px;direction:ltr;font-size:8.5px;color:#333;transform:scaleX(.8);transform-origin:right">1500, 115px</div>
<svg class="a" style="left:991px;top:589.5px" width="9" height="9" viewBox="0 0 9 9"><path d="M4.5 0.5V8.5M0.5 4.5H8.5" stroke="#333" stroke-width="1"/><path d="M4.5 0L3 1.8H6ZM4.5 9L3 7.2H6ZM0 4.5L1.8 3V6ZM9 4.5L7.2 3V6Z" fill="#333"/></svg>
<!--/STATUS-->
</body></html>
